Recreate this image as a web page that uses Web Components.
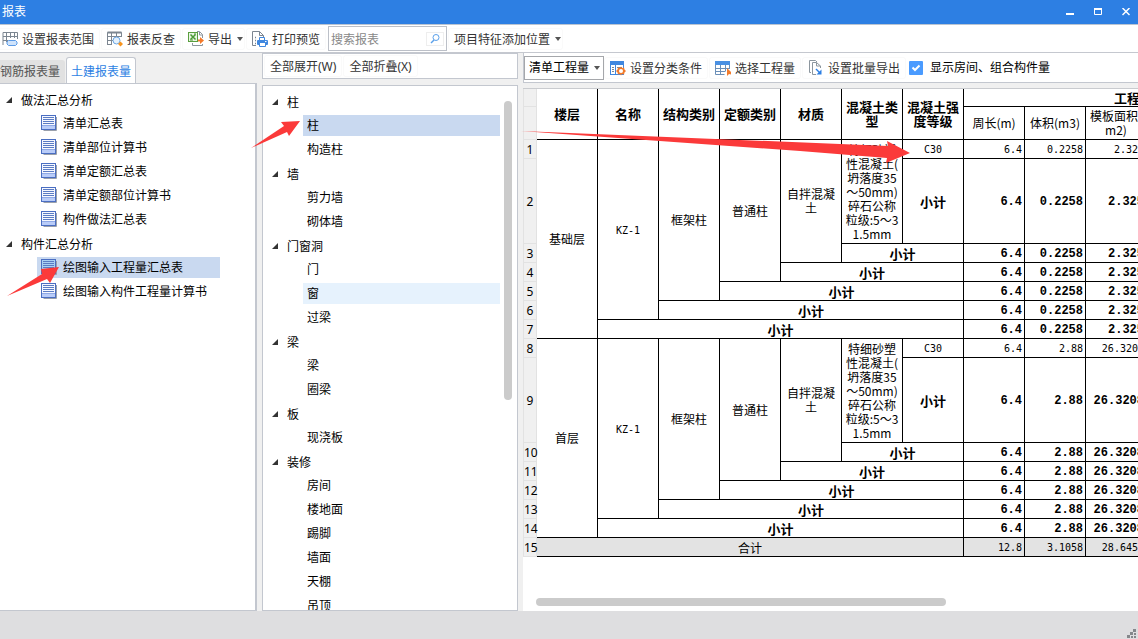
<!DOCTYPE html>
<html lang="zh-CN">
<head>
<meta charset="utf-8">
<title>报表</title>
<style>
  body { margin: 0; }
</style>
</head>
<body>
<report-app></report-app>

<script>
const define = (name, html, setup) => {
  const tpl = document.createElement('template');
  tpl.innerHTML = html;
  customElements.define(name, class extends HTMLElement {
    constructor() {
      super();
      this.attachShadow({ mode: 'open' }).appendChild(tpl.content.cloneNode(true));
    }
    connectedCallback() {
      if (setup && !this.ready) { this.ready = true; setup(this, this.shadowRoot); }
    }
  });
};

/* ---------- icons ---------- */
const sheet = (paper, band) => `<path d="M2.500 15.500h13V2" fill="none" stroke="#9aa0ab"/><rect x=".5" y=".5" width="14" height="14" fill="${paper}" stroke="#4a6ec2"/>
    <path d="M1 11h13v3H1z" fill="${band}"/><path d="M1 10.500h13" stroke="#8fa9e6"/><path d="M2 2.500h11M2 4.500h11M2 6.500h11M2 8.500h11" stroke="#5b7cc4"/>`;
const ICONS = {
  range: `<path d="M1 14V1.500H15.500V8M1 5.500H15.500M1 9.500H6M4.500 1.500V11M8.500 1.500V7M12.500 1.500V7" fill="none" stroke="#7c8691"/>
    <path d="M6.500 9.500h7l1.500 1.500v2l-1.500 1.500h-7L5 13v-2z" fill="#cfe3fb" stroke="#5b9ae6"/>`,
  lookup: `<path d="M.5 14V1.500H14.500V6M.5 5.500H14.500M.5 9.500H6M.5 13.500H5M4.500 1.500V14M9.500 1.500V6" fill="none" stroke="#7c8691"/>
    <path d="M.5 1.500h14" stroke="#7c8691" stroke-width="2"/>
    <circle cx="9.500" cy="9.500" r="3.500" fill="#e4f1fd" stroke="#6aa5e2"/>
    <path d="M13.500 10.500l2.500 2.500-2.500 2.500L11 13z" fill="#f7941e"/>`,
  excel: `<path d="M9 .5h2.500l3 3V7M14.500 13v1.500h-10V12" fill="none" stroke="#8c969e"/><path d="M11.500 1v3h3" fill="none" stroke="#8c969e"/>
    <rect x=".5" y="1.500" width="9" height="9" fill="#eaf5e4" stroke="#5a9e3f"/>
    <path d="M2.500 3.500l5 5M7.500 3.500l-5 5" stroke="#4a9a35" stroke-width="1.500"/><path d="M6 3h2M2 9h3" stroke="#4a9a35"/>
    <path d="M10 8.500h2V6l4 3.500-4 3.500v-2.500h-2z" fill="#f47a2a"/>`,
  print: `<path d="M4 14.500H.5V.5h7l4 4V6" fill="none" stroke="#7c8691"/><path d="M7.500.5v4h4" fill="none" stroke="#7c8691"/>
    <path d="M3 6.500h1M3 9.500h1M3 12.500h1" stroke="#7c8691" stroke-width="1.500"/>
    <path d="M7.500 9V6.500h5V9" fill="#fff" stroke="#3f87df"/><rect x="5" y="9" width="11" height="5" rx="1" fill="#3f87df"/>
    <path d="M7.500 11.500h6v4h-6z" fill="#fff" stroke="#3f87df"/><path d="M13 10.500h1.500" stroke="#fff"/>`,
  classify: `<rect x=".5" y="1.500" width="13" height="13" fill="#fff" stroke="#3f87df"/><path d="M0 1h14v4H0z" fill="#3f87df"/>
    <path d="M5.500 5v10" stroke="#3f87df"/><path d="M2 7.500h2M2 9.500h2M2 11.500h2M7 7.500h5" stroke="#7c8691"/>
    <path d="M11 6.500l1 1.500 2-.5.5 2 1.500 1.500-1.500 1.500-.5 2-2-.5-1 1.500-1-1.500-2 .5-.5-2L6 11l1.500-1.500.5-2 2 .5z" fill="#f27b2b"/>
    <circle cx="11" cy="11" r="2" fill="#fff"/>`,
  choose: `<path d="M.5 4v10.500h9M.5 8.500h14M.5 11.500h10M5.500 4v10.500M10.500 4v7M14.500 4v5" fill="none" stroke="#6b8fb8"/>
    <path d="M0 1h15v4H0z" fill="#4a90e2"/><path d="M12 8v8l2-2 2 .5V12z" fill="#f27b2b"/>`,
  batch: `<path d="M3 12.500H1.500V.5h6L9 2" fill="none" stroke="#8c969e"/><path d="M8 14.500H4.500V2.500h4L12.500 6v2" fill="none" stroke="#8c969e"/>
    <path d="M8.500 2.500V6h4" fill="none" stroke="#8c969e"/>
    <path d="M8 9l4 4" stroke="#2d7fe3" stroke-width="1.500"/><path d="M13.500 9.500v5H8.500z" fill="#2d7fe3"/>`,
  sheet: sheet('#f6f8ff', '#b9ccf8'),
  'sheet-on': sheet('#a9d0f3', '#7fb2ec'),
  search: `<circle cx="9" cy="6.500" r="3" fill="none" stroke="#5aa0ea"/><path d="M7 9l-3 3" stroke="#5aa0ea" stroke-width="1.500"/>`,
  grip: `<g fill="#85888c"><path d="M11 6h3v3h-3zM8 9h3v3H8zM12 10h2v2h-2zM5 12h3v3H5zM9 13h2v2H9zM12 13h2v2h-2z"/></g>`
};
define('ui-icon', `<style>
  :host { display: block; width: 16px; height: 16px; flex: none; }
  svg { display: block; width: 100%; height: 100%; overflow: visible; }
</style><svg viewBox="0 0 16 16" aria-hidden="true"></svg>`,
  (el, root) => { root.querySelector('svg').innerHTML = ICONS[el.getAttribute('name')]; });

/* ---------- title bar ---------- */
define('title-bar', `<style>
  :host { display: flex; height: 24px; flex: none; align-items: center; justify-content: space-between;
          background: #2d7fe3; color: #fff; border-bottom: 1px solid #b9c4d2; }
  h1 { margin: 0 0 0 2px; font-size: 12px; font-weight: 400; }
  nav { display: flex; gap: 4px; }
  button { width: 24px; height: 22px; padding: 0; border: 0; background: none; color: inherit;
           display: flex; align-items: center; justify-content: center; }
  svg { display: block; }
</style>
<h1><slot></slot></h1>
<nav>
  <button aria-label="最小化"><svg width="8" height="8"><path d="M0 5h8v2H0z" fill="#fff"/></svg></button>
  <button aria-label="最大化"><svg width="8" height="8"><path d="M.5.500h7v6h-7z" fill="none" stroke="#fff"/><path d="M0 0h8v2H0z" fill="#fff"/></svg></button>
  <button aria-label="关闭"><svg width="8" height="8"><path d="M.5 0l7 7M7.500 0l-7 7" stroke="#fff" stroke-width="1.500"/></svg></button>
</nav>`);

/* ---------- toolbar pieces ---------- */
define('tool-button', `<style>
  :host { display: block; flex: none; }
  button { display: flex; align-items: center; gap: 4px; height: 22px; padding: 0 6px; border: 0; border-radius: 3px;
           background: #fff; box-shadow: inset 0 0 0 1px #fafafa; color: #333; font: inherit; white-space: nowrap; }
  span { padding-top: 2px; }
  i { display: none; width: 0; margin-left: 1px; border: 3px solid transparent; border-top: 4px solid #555; border-bottom: 0; }
  :host([menu]) i { display: block; }
  :host([menu]) button { padding-right: 2px; }
</style><button><slot name="icon"></slot><span><slot></slot></span><i></i></button>`);

define('search-field', `<style>
  :host { display: flex; align-items: center; box-sizing: border-box; width: 119px; height: 25px; flex: none; margin-left: 1px;
          border: 1px solid #bcc0c8; background: #fff; }
  input { flex: 1; min-width: 0; padding: 2px 0 0 2px; border: 0; outline: 0; background: none; font: inherit; color: #333; }
  input::placeholder { color: #888; opacity: 1; }
  button { width: 16px; height: 12px; margin-right: 3px; padding: 0; border: 0; background: #fff; box-shadow: 0 0 0 1px #eee;
           display: flex; align-items: center; justify-content: center; }
</style><input type="search" aria-label="搜索报表" placeholder="搜索报表"><button aria-label="搜索"><ui-icon name="search"></ui-icon></button>`);

define('main-toolbar', `<style>
  :host { display: flex; align-items: center; gap: 1px; height: 27px; flex: none; padding-right: 6px; margin-left: -4px;
          background: #fff; border-bottom: 1px solid #c5c8cf; }
</style>
<tool-button><ui-icon slot="icon" name="range"></ui-icon>设置报表范围</tool-button>
<tool-button><ui-icon slot="icon" name="lookup"></ui-icon>报表反查</tool-button>
<tool-button menu><ui-icon slot="icon" name="excel"></ui-icon>导出</tool-button>
<tool-button><ui-icon slot="icon" name="print"></ui-icon>打印预览</tool-button>
<search-field></search-field>
<tool-button menu>项目特征添加位置</tool-button>`);

/* ---------- tree ---------- */
define('tree-group', `<style>
  :host { display: block; }
  button { display: flex; align-items: center; gap: 9px; height: 24px; padding: 0; border: 0; background: none; font: inherit; color: #000; }
  span { padding-top: 2px; }
</style>
<button aria-expanded="true"><svg width="6" height="6" aria-hidden="true"><path d="M6 0v6H0z" fill="#333"/></svg><span></span></button>
<div role="group"><slot></slot></div>`,
  (el, root) => { root.querySelector('span').textContent = el.getAttribute('label'); });

define('tree-item', `<style>
  :host { display: flex; align-items: flex-start; box-sizing: border-box; height: 24px; padding: 1px 0 0 31px; }
  button { display: flex; flex: 1; align-items: flex-start; gap: 6px; box-sizing: border-box; height: 21px; padding: 2px 4px 0;
           border: 0; background: none; font: inherit; color: #000; text-align: left; white-space: nowrap; }
  span { padding-top: 1px; }
  :host([selected]) button { background: #c9d9f0; }
  :host([hovered]) button { background: #e6f2fd; }
</style><button><slot name="icon"></slot><span><slot></slot></span></button>`);

/* ---------- left column ---------- */
define('report-list', `<style>
  :host { display: flex; flex-direction: column; min-height: 0; }
  .tabs { display: flex; align-items: flex-end; gap: 1px; height: 30px; flex: none; }
  .tabs button { box-sizing: border-box; height: 23px; padding: 0 5px 0 0; border: 0; border-radius: 0 3px 0 0; background: #e1e1e1;
                 font: inherit; color: #555; white-space: nowrap; }
  .tabs .on { height: 27px; margin-bottom: -1px; padding: 1px 4px 0; border: 1px solid #c3c7cf; border-bottom: 0;
              border-radius: 3px 3px 0 0; background: #fff; color: #2d7fe3; }
  .pane { flex: 1; min-height: 0; overflow: hidden; padding: 4px 35px 0 6px; background: #fff;
          border: solid #c3c7cf; border-width: 1px 2px 1px 0; }
</style>
<div class="tabs" role="tablist">
  <button role="tab">钢筋报表量</button><button role="tab" class="on" aria-selected="true">土建报表量</button>
</div>
<div class="pane" role="tree">
  <tree-group label="做法汇总分析">
    <tree-item><ui-icon slot="icon" name="sheet"></ui-icon>清单汇总表</tree-item>
    <tree-item><ui-icon slot="icon" name="sheet"></ui-icon>清单部位计算书</tree-item>
    <tree-item><ui-icon slot="icon" name="sheet"></ui-icon>清单定额汇总表</tree-item>
    <tree-item><ui-icon slot="icon" name="sheet"></ui-icon>清单定额部位计算书</tree-item>
    <tree-item><ui-icon slot="icon" name="sheet"></ui-icon>构件做法汇总表</tree-item>
  </tree-group>
  <tree-group label="构件汇总分析">
    <tree-item selected><ui-icon slot="icon" name="sheet-on"></ui-icon>绘图输入工程量汇总表</tree-item>
    <tree-item><ui-icon slot="icon" name="sheet"></ui-icon>绘图输入构件工程量计算书</tree-item>
  </tree-group>
</div>`);

/* ---------- middle column ---------- */
define('component-list', `<style>
  :host { display: flex; flex-direction: column; gap: 6px; min-height: 0; }
  .bar { display: flex; align-items: center; gap: 1px; box-sizing: border-box; height: 26px; flex: none; padding-left: 1px;
         background: #fff; border: 1px solid #c3c7cf; }
  .pane { position: relative; flex: 1; min-height: 0; overflow: hidden; padding: 4px 17px 0 9px; background: #fff;
          border: 1px solid #c3c7cf; }
  .thumb { position: absolute; top: 15px; right: 5px; width: 8px; height: 57%; border-radius: 4px; background: #cbcbcb; }
</style>
<div class="bar"><tool-button>全部展开(W)</tool-button><tool-button>全部折叠(X)</tool-button></div>
<div class="pane" role="tree">
  <tree-group label="柱"><tree-item selected>柱</tree-item><tree-item>构造柱</tree-item></tree-group>
  <tree-group label="墙"><tree-item>剪力墙</tree-item><tree-item>砌体墙</tree-item></tree-group>
  <tree-group label="门窗洞"><tree-item>门</tree-item><tree-item hovered>窗</tree-item><tree-item>过梁</tree-item></tree-group>
  <tree-group label="梁"><tree-item>梁</tree-item><tree-item>圈梁</tree-item></tree-group>
  <tree-group label="板"><tree-item>现浇板</tree-item></tree-group>
  <tree-group label="装修"><tree-item>房间</tree-item><tree-item>楼地面</tree-item><tree-item>踢脚</tree-item><tree-item>墙面</tree-item><tree-item>天棚</tree-item><tree-item>吊顶</tree-item></tree-group>
  <div class="thumb"></div>
</div>`);

/* ---------- quantity table ---------- */
const spare = '<td></td>'.repeat(3);
const values = (v, cls) => v.map(x => `<td class="n ${cls}">${x}</td>`).join('') + spare;
const floorRows = (start, floor, v) => {
  const sub = (i, span) => `<tr><th class="no">${start + i}</th><td class="b" colspan="${span}">小计</td>${values(v, 'b')}</tr>`;
  return `<tr><th class="no">${start}</th>
    <td rowspan="7">${floor}</td><td class="m" rowspan="6">KZ-1</td><td rowspan="5">框架柱</td><td rowspan="4">普通柱</td>
    <td rowspan="3">自拌混凝<br>土</td>
    <td rowspan="2">特细砂塑<br>性混凝土(<br>坍落度35<br>～50mm)<br>碎石公称<br>粒级:5～3<br>1.5mm</td>
    <td class="m">C30</td>${values(v, '')}</tr>
    <tr class="tall"><th class="no">${start + 1}</th><td class="b">小计</td>${values(v, 'b')}</tr>`
    + sub(2, 2) + sub(3, 3) + sub(4, 4) + sub(5, 5) + sub(6, 6);
};
define('quantity-table', `<style>
  :host { display: block; }
  table { table-layout: fixed; width: 807px; border-collapse: separate; border-spacing: 0; color: #000;
          font: 12px/14px "Noto Sans CJK SC", sans-serif; background: #fff; }
  col { width: 61px; } col.no { width: 14px; }
  tr { height: 19px; } tr.tall { height: 85px; } tr.h1 { height: 18px; } tr.h2 { height: 33px; }
  td, th { box-sizing: border-box; padding: 0; border: solid #000; border-width: 0 1px 1px 0; text-align: center;
           vertical-align: middle; font-weight: 400; white-space: nowrap; }
  th.b, td.b { font-weight: 700; font-size: 13px; }
  td.b, td.m, td.n, .sum td { padding-top: 2px; }
  td.m { font-family: "DejaVu Sans Mono", monospace; font-size: 10px; }
  td.n { padding-right: 2px; text-align: right; font-family: "DejaVu Sans Mono", monospace; font-size: 10px; }
  td.n.b { font-family: "Liberation Mono", monospace; font-size: 12px; }
  th.no { padding-top: 2px; border: solid #e2e2e2; border-width: 0 1px 1px 1px; background: #f0f0f0; font: 12px/14px "Noto Sans", sans-serif; }
  .sum td { background: #e3e3e3; }
</style>
<table>
  <colgroup><col class="no">${'<col>'.repeat(13)}</colgroup>
  <thead>
    <tr class="h1"><th class="no"></th><th class="b" rowspan="2">楼层</th><th class="b" rowspan="2">名称</th><th class="b" rowspan="2">结构类别</th>
      <th class="b" rowspan="2">定额类别</th><th class="b" rowspan="2">材质</th><th class="b" rowspan="2">混凝土类<br>型</th>
      <th class="b" rowspan="2">混凝土强<br>度等级</th><th class="b" colspan="6">工程量名称</th></tr>
    <tr class="h2"><th class="no"></th><th>周长(m)</th><th>体积(m3)</th><th>模板面积(<br>m2)</th><th></th><th></th><th></th></tr>
  </thead>
  <tbody>
    ${floorRows(1, '基础层', ['6.4', '0.2258', '2.325'])}
    ${floorRows(8, '首层', ['6.4', '2.88', '26.3208'])}
    <tr class="sum"><th class="no">15</th><td colspan="7">合计</td>${values(['12.8', '3.1058', '28.6458'], '')}</tr>
  </tbody>
</table>`);

/* ---------- right column ---------- */
define('report-view', `<style>
  :host { display: flex; flex-direction: column; gap: 5px; min-width: 0; min-height: 0; }
  .bar { display: flex; align-items: center; box-sizing: border-box; height: 30px; flex: none; gap: 1px;
         overflow: hidden; background: #fff; border: solid #c3c7cf; border-width: 0 0 1px 1px; }
  .drop { position: relative; flex: none; display: block; margin-right: -1px; }
  select { display: block; box-sizing: border-box; width: 80px; height: 24px; padding: 0 0 0 4px; border: 1px solid #a5a7ab; border-radius: 0;
           appearance: none; background: #fff; font: inherit; color: #000; }
  .drop i { position: absolute; right: 4px; top: 10px; border: 3px solid transparent; border-top: 4px solid #555; border-bottom: 0; }
  .check { display: flex; align-items: center; gap: 7px; margin-left: 2px; white-space: nowrap; color: #000; }
  input { appearance: none; width: 14px; height: 14px; margin: 0; border-radius: 1px; flex: none;
          background: #4a9bff url('data:image/svg+xml,<svg xmlns="http://www.w3.org/2000/svg" viewBox="0 0 14 14"><path d="M3.500 6.500L6 9l4.500-4.500" fill="none" stroke="white" stroke-width="2"/></svg>'); }
  .pane { position: relative; flex: 1; min-height: 0; overflow: hidden; background: #fff; border-top: 1px solid #c9cbcf; }
  .thumb { position: absolute; left: 13px; bottom: 5px; width: 410px; max-width: 67%; height: 8px; border-radius: 4px; background: #cbcbcb; }
</style>
<div class="bar">
  <span class="drop"><select aria-label="工程量类型"><option>清单工程量</option></select><i></i></span>
  <tool-button><ui-icon slot="icon" name="classify"></ui-icon>设置分类条件</tool-button>
  <tool-button><ui-icon slot="icon" name="choose"></ui-icon>选择工程量</tool-button>
  <tool-button><ui-icon slot="icon" name="batch"></ui-icon>设置批量导出</tool-button>
  <label class="check"><input type="checkbox" checked>显示房间、组合构件量</label>
</div>
<div class="pane"><quantity-table></quantity-table><div class="thumb"></div></div>`);

/* ---------- red pointers drawn over the window ---------- */
define('pointer-layer', `<style>
  :host { position: absolute; inset: 0; pointer-events: none; overflow: hidden; }
  svg { display: block; width: 100%; height: 100%; }
</style>
<svg aria-hidden="true"><g fill="#fb3a3a">
  <path d="M7 296L42 274L41 269L59 267L50 283L47 279Z"/>
  <path d="M251 148L284 126L281 122L300 121L289 136L287 132Z"/>
  <path d="M521 131L888 146L887 141L910 153L886 163L887 158L800 151Z"/>
</g></svg>`);

define('report-app', `<style>
  :host { position: relative; display: flex; flex-direction: column; height: 100vh; overflow: hidden; background: #f0f0f0; color: #222;
          font: 12px/16px "Noto Sans", "Noto Sans CJK SC", sans-serif; }
  main { flex: 1; min-height: 0; display: grid; grid-template: minmax(0, 1fr) / 257px 256px minmax(0, 1fr); column-gap: 5px; }
  footer { display: flex; align-items: flex-end; justify-content: flex-end; height: 28px; flex: none; background: #dedee0; }
</style>
<title-bar>报表</title-bar>
<main-toolbar></main-toolbar>
<main><report-list></report-list><component-list></component-list><report-view></report-view></main>
<footer><ui-icon name="grip"></ui-icon></footer>
<pointer-layer></pointer-layer>`);
</script>
</body>
</html>
